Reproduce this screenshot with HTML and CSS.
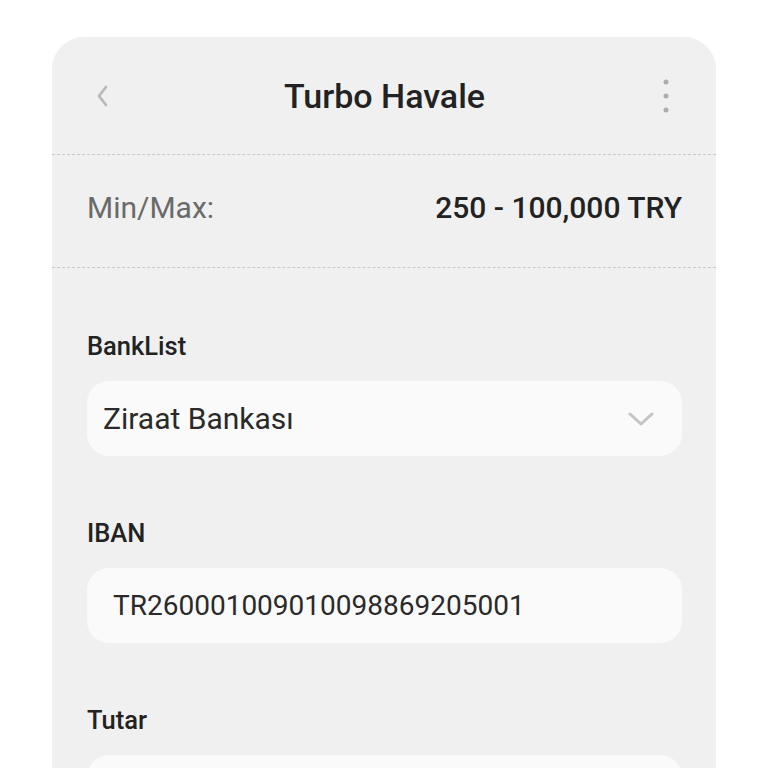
FILE: index.html
```html
<!DOCTYPE html>
<html>
<head>
  <title>Turbo Havale</title>
  <link rel="stylesheet" href="styles.css">
</head>
<body>
  <div class="card">
    <!-- Header -->
    <div class="header">
      <button class="icon-btn back-btn" aria-label="Geri">
        <svg width="14" height="24" viewBox="0 0 14 24"><path d="M10 3 L3 12 L10 21" fill="none" stroke="#b8b8b8" stroke-width="2.6" stroke-linecap="round" stroke-linejoin="round"/></svg>
      </button>
      <h1 class="title">Turbo Havale</h1>
      <button class="icon-btn more-btn" aria-label="Menü">
        <svg width="8" height="36" viewBox="0 0 8 36"><circle cx="4" cy="4" r="2.5" fill="#adadad"/><circle cx="4" cy="18" r="2.5" fill="#adadad"/><circle cx="4" cy="32" r="2.5" fill="#adadad"/></svg>
      </button>
    </div>

    <!-- Limits -->
    <div class="limits">
      <span class="limits-label">Min/Max:</span>
      <span class="limits-value">250 - 100,000 TRY</span>
    </div>

    <!-- Form -->
    <div class="form">
      <div class="field">
        <label class="field-label">BankList</label>
        <div class="select-box">
          <span>Ziraat Bankası</span>
          <svg width="26" height="16" viewBox="0 0 26 16"><path d="M2 3 L13 13 L24 3" fill="none" stroke="#c4c4c4" stroke-width="3" stroke-linecap="round" stroke-linejoin="round"/></svg>
        </div>
      </div>

      <div class="field">
        <label class="field-label">IBAN</label>
        <div class="input-box iban">TR260001009010098869205001</div>
      </div>

      <div class="field">
        <label class="field-label">Tutar</label>
        <div class="input-box"></div>
      </div>
    </div>
  </div>
</body>
</html>
```

FILE: styles.css
```css
body {
  margin: 0;
  background: #ffffff;
  font-family: Roboto, "Noto Sans", sans-serif;
  color: #222222;
}

.card {
  width: 664px;
  margin: 37px auto 0;
  background: #f0f0f0;
  border-radius: 32px 32px 0 0;
  min-height: 760px;
}

.header {
  height: 117px;
  display: flex;
  align-items: center;
  justify-content: space-between;
  padding: 0 35px 0 36px;
  border-bottom: 1px dashed #c9c9c9;
}

.icon-btn {
  background: none;
  border: none;
  padding: 0;
  display: flex;
  align-items: center;
  width: 30px;
  justify-content: center;
  margin-top: 1px;
}

.title {
  margin: 0;
  font-size: 34px;
  font-weight: 500;
  color: #222222;
}

.limits {
  height: 104px;
  padding: 0 34px 8px 35px;
  display: flex;
  align-items: center;
  justify-content: space-between;
  border-bottom: 1px dashed #c9c9c9;
  font-size: 30px;
}

.limits-label {
  color: #6a6a6a;
}

.limits-value {
  font-weight: 500;
  color: #222222;
}

.form {
  padding: 63px 34px 0 35px;
  display: flex;
  flex-direction: column;
  gap: 62px;
}

.field {
  display: flex;
  flex-direction: column;
  gap: 20px;
}

.field-label {
  font-size: 25.5px;
  font-weight: 500;
  line-height: 30px;
  color: #222222;
}

.select-box,
.input-box {
  height: 75px;
  border-radius: 22px;
  background: #fafafa;
  display: flex;
  align-items: center;
  box-sizing: border-box;
  font-size: 30px;
  color: #2a2a2a;
}

.select-box {
  justify-content: space-between;
  padding: 0 28px 0 16px;
}

.input-box {
  padding: 0 26px;
}

.iban {
  font-size: 28px;
}
```
